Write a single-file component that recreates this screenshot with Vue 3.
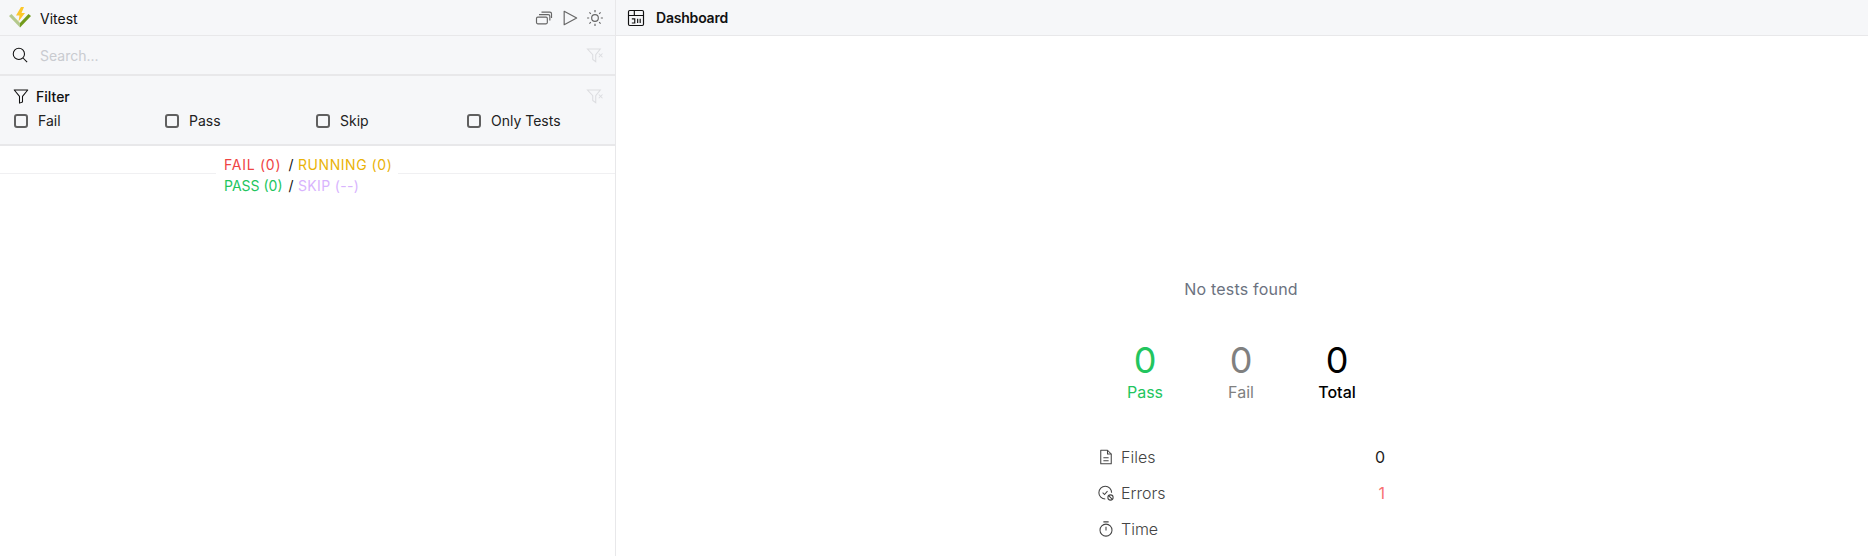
<template>
  <div class="app">
    <aside class="sidebar">
      <header class="top-bar">
        <svg class="logo" viewBox="0 0 24 24" width="24" height="24">
          <path d="M1 10 L3.5 8 L12 17 L12 21.5 Z" fill="#b4c98c" />
          <path d="M23 10 L20.5 8 L12 17 L12 21.5 Z" fill="#729b1b" />
          <path d="M13 1 L8 9.5 H11.5 L10.5 15.5 L17 7 H13.5 L16 1 Z" fill="#fcc72b" />
        </svg>
        <span class="brand">Vitest</span>
        <div class="top-actions">
          <svg viewBox="0 0 24 24" width="20" height="20" class="action">
            <rect x="3" y="11" width="13" height="8" rx="1.5" />
            <path d="M6 8h11a2 2 0 0 1 2 2v5" />
            <path d="M9 5h10a2 2 0 0 1 2 2v5" />
          </svg>
          <svg viewBox="0 0 24 24" width="20" height="20" class="action">
            <path d="M5 4v16l15-8z" stroke-linejoin="round" />
          </svg>
          <svg viewBox="0 0 24 24" width="20" height="20" class="action">
            <circle cx="12" cy="12" r="4" />
            <path d="M12 2.5v2.5M12 19v2.5M2.5 12h2.5M19 12h2.5M5.3 5.3 7 7M17 17l1.7 1.7M5.3 18.7 7 17M17 7l1.7-1.7" />
          </svg>
        </div>
      </header>

      <div class="search-row">
        <svg viewBox="0 0 24 24" width="18" height="18" class="dark-icon">
          <circle cx="10.5" cy="10.5" r="7.5" />
          <path d="m16 16 5.5 5.5" />
        </svg>
        <span class="placeholder">Search...</span>
        <svg viewBox="0 0 24 24" width="18" height="18" class="clear-icon">
          <path d="M2 4h17l-6 7.5V21l-4-3v-6.5z" />
          <path d="m17 10 5 5M22 10l-5 5" />
        </svg>
      </div>

      <section class="filter-box">
        <div class="filter-head">
          <svg viewBox="0 0 24 24" width="18" height="18" class="dark-icon">
            <path d="M3 4h18l-7 8.5V20l-4 1.5v-9z" stroke-linejoin="round" />
          </svg>
          <span class="filter-title">Filter</span>
          <svg viewBox="0 0 24 24" width="18" height="18" class="clear-icon">
            <path d="M2 4h17l-6 7.5V21l-4-3v-6.5z" />
            <path d="m17 10 5 5M22 10l-5 5" />
          </svg>
        </div>
        <div class="filter-options">
          <label v-for="opt in filterOptions" :key="opt" class="option">
            <span class="checkbox"></span>
            <span>{{ opt }}</span>
          </label>
        </div>
      </section>

      <div class="summary">
        <div class="summary-row">
          <span class="fail">FAIL (0)</span>
          <span class="sep">/</span>
          <span class="running">RUNNING (0)</span>
        </div>
        <div class="summary-row">
          <span class="pass">PASS (0)</span>
          <span class="sep">/</span>
          <span class="skip">SKIP (--)</span>
        </div>
      </div>
    </aside>

    <main class="content">
      <header class="content-bar">
        <svg viewBox="0 0 24 24" width="20" height="20" class="dark-icon">
          <rect x="3" y="3" width="18" height="18" rx="1.5" />
          <path d="M3 9h18M10 3v6" />
          <path d="M7 13h3.5v5H7M14 13v5M17 13v5" />
        </svg>
        <span class="content-title">Dashboard</span>
      </header>
      <div class="dashboard">
        <p class="empty">No tests found</p>
        <div class="stats">
          <div v-for="s in stats" :key="s.label" class="stat" :class="s.cls">
            <span class="stat-num">0</span>
            <span class="stat-label">{{ s.label }}</span>
          </div>
        </div>
        <div class="details">
          <div class="detail">
            <svg viewBox="0 0 24 24" width="18" height="18" class="grey-icon">
              <path d="M5 3h9l5 5v13H5z" stroke-linejoin="round" />
              <path d="M14 3v5h5M8.5 13h7M8.5 17h7" />
            </svg>
            <span class="detail-label">Files</span>
            <span class="detail-value">0</span>
          </div>
          <div class="detail">
            <svg viewBox="0 0 24 24" width="18" height="18" class="grey-icon">
              <path d="M11 20a8.5 8.5 0 1 1 8.5-8.5" />
              <path d="m7.5 11.5 2.5 2.5 4-4.5" />
              <circle cx="18" cy="18" r="3.5" />
              <path d="m15.5 15.5 5 5" />
            </svg>
            <span class="detail-label">Errors</span>
            <span class="detail-value error">1</span>
          </div>
          <div class="detail">
            <svg viewBox="0 0 24 24" width="18" height="18" class="grey-icon">
              <circle cx="12" cy="13.5" r="8" />
              <path d="M8.5 2.5h7M12 9v5" />
            </svg>
            <span class="detail-label">Time</span>
            <span class="detail-value"></span>
          </div>
        </div>
      </div>
    </main>
  </div>
</template>

<script setup>
const filterOptions = ['Fail', 'Pass', 'Skip', 'Only Tests']

const stats = [
  { label: 'Pass', cls: 'is-pass' },
  { label: 'Fail', cls: 'is-fail' },
  { label: 'Total', cls: 'is-total' },
]
</script>

<style>
html, body {
  margin: 0;
  background: #fff;
}
</style>

<style scoped>
.app {
  display: flex;
  width: 1868px;
  height: 556px;
  overflow: hidden;
  font-family: Inter, "Liberation Sans", sans-serif;
  color: #111;
}

svg {
  fill: none;
  stroke-width: 1.4;
  flex-shrink: 0;
}

.sidebar {
  width: 615px;
  flex-shrink: 0;
  border-right: 1px solid #e8e8ea;
  display: flex;
  flex-direction: column;
}

.top-bar {
  height: 35px;
  display: flex;
  align-items: center;
  padding: 0 10px 0 8px;
  background: #f6f7f9;
  border-bottom: 1px solid #e8e8ea;
}

.brand {
  margin-left: 8px;
  font-size: 14px;
  margin-top: 1px;
}

.top-actions {
  margin-left: auto;
  display: flex;
  gap: 5.5px;
}

.action {
  stroke: #666;
}

.search-row {
  height: 38px;
  display: flex;
  align-items: center;
  padding: 0 11px;
  background: #f6f7f9;
  border-bottom: 2px solid #e8e8ea;
}

.placeholder {
  margin-left: 11px;
  font-size: 14px;
  color: #c9cbd0;
}

.dark-icon {
  stroke: #111;
}

.clear-icon {
  stroke: #dcdde0;
  margin-left: auto;
}

.filter-box {
  height: 68px;
  padding: 0 11px 0 14px;
  background: #f6f7f9;
  border-bottom: 2px solid #e8e8ea;
}

.filter-head {
  display: flex;
  align-items: center;
  height: 18px;
  margin-top: 11px;
  margin-left: -2px;
}

.filter-title {
  margin-left: 6px;
  font-size: 14px;
  font-weight: 500;
}

.filter-options {
  display: grid;
  grid-template-columns: repeat(4, 151px);
  margin-top: 7px;
}

.option {
  display: flex;
  align-items: center;
  gap: 10px;
  font-size: 14px;
  line-height: 18px;
  color: #222;
}

.checkbox {
  width: 10px;
  height: 10px;
  border: 2px solid #606060;
  border-radius: 3px;
}

.summary {
  position: relative;
  margin-top: 8px;
  font-size: 14px;
  line-height: 21px;
  white-space: nowrap;
}

.summary::before {
  content: '';
  position: absolute;
  left: 0;
  right: 0;
  top: 19px;
  border-top: 1px solid #f0f0f2;
}

.summary-row {
  position: relative;
  box-sizing: border-box;
  width: 182px;
  margin-left: 216px;
  padding-left: 8px;
  background: #fff;
  display: grid;
  grid-template-columns: 60px 14px auto;
}

.fail { color: #ef4444; letter-spacing: 0.75px; }
.running { color: #eab308; letter-spacing: 0.55px; }
.pass { color: #22c55e; letter-spacing: 0; }
.skip { color: #d8b4fe; letter-spacing: 0.35px; }
.sep { color: #111; text-align: center; }

.content {
  flex: 1;
  display: flex;
  flex-direction: column;
}

.content-bar {
  height: 35px;
  display: flex;
  align-items: center;
  gap: 10px;
  padding-left: 10px;
  background: #f6f7f9;
  border-bottom: 1px solid #e8e8ea;
}

.content-title {
  font-size: 14px;
  font-weight: 600;
  letter-spacing: -0.2px;
}

.dashboard {
  display: flex;
  flex-direction: column;
  align-items: center;
  padding-right: 2px;
}

.empty {
  margin: 241px 0 0;
  font-size: 16px;
  line-height: 24px;
  letter-spacing: 0.2px;
  color: #6b7280;
}

.stats {
  display: flex;
  gap: 48px;
  margin-top: 39px;
}

.stat {
  width: 48px;
  display: flex;
  flex-direction: column;
  align-items: center;
}

.stat-num {
  font-size: 36px;
  line-height: 40px;
}

.stat-label {
  font-size: 16px;
  line-height: 24px;
}

.is-pass { color: #22c55e; }
.is-fail { color: #808080; }
.is-total { color: #000; }
.is-total .stat-label { font-weight: 500; }

.details {
  width: 288px;
  margin-top: 35px;
}

.detail {
  height: 36px;
  display: flex;
  align-items: center;
  font-size: 16px;
  font-weight: 300;
  color: #444;
}

.grey-icon {
  stroke: #444;
}

.detail-label {
  margin-left: 6px;
}

.detail-value {
  margin-left: auto;
  font-weight: 400;
  color: #222;
}

.detail-value.error {
  color: #f87171;
}
</style>
